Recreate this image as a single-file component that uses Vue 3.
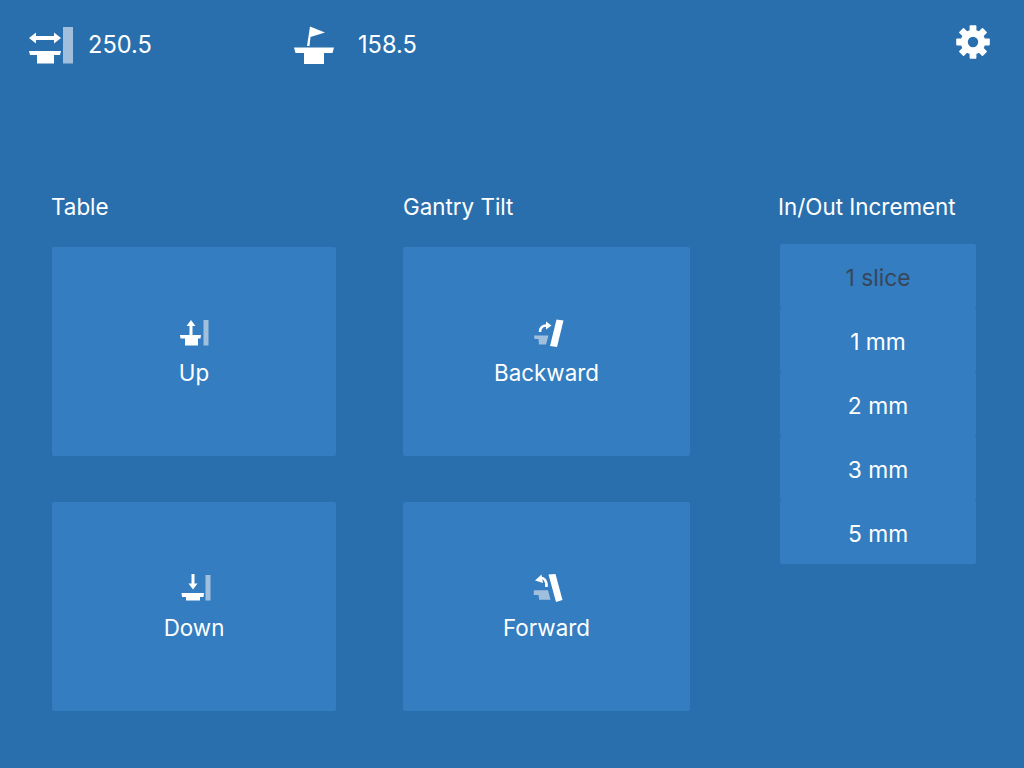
<script setup>
const incrementos = ['1 slice', '1 mm', '2 mm', '3 mm', '5 mm']
const seleccionado = '1 slice'

// gear teeth, 8 around the centre
const dientes = [0, 45, 90, 135, 180, 225, 270, 315]
</script>

<template>
  <div class="page">
    <header class="top">
      <div class="readout first">
        <svg class="top-icon" width="44" height="37" viewBox="29 28 44 37">
          <rect x="63" y="28" width="10" height="36.5" fill="#a0bfdc" />
          <path d="M29 39 L36 33.5 V37 H54 V33.5 L61 39 L54 44.5 V41 H36 V44.5 Z" fill="#fff" />
          <path d="M29 52 H61 L60 56 H54 V64.5 H37 V56 H30 Z" fill="#fff" />
        </svg>
        <span class="value">250.5</span>
      </div>
      <div class="readout second">
        <svg class="top-icon" width="40" height="38" viewBox="294 26 40 38">
          <path d="M307 46 L310 26.5 L325 32.5 L310.5 37 L309.5 46 Z" fill="#fff" />
          <path d="M294 47.5 H334 L332.5 53 H324 V64 H304 V53 H295.5 Z" fill="#fff" />
        </svg>
        <span class="value">158.5</span>
      </div>
      <svg class="gear" width="36" height="36" viewBox="-18 -18 36 36">
        <rect v-for="d in dientes" :key="d" x="-3.4" y="-16.8" width="6.8" height="8" rx="0.8" fill="#fff" :transform="`rotate(${d})`" />
        <circle r="8.7" fill="none" stroke="#fff" stroke-width="7" />
      </svg>
    </header>

    <main class="content">
      <section class="col col-table">
        <h2>Table</h2>
        <div class="stack">
          <button class="big">
            <svg width="34" height="28" viewBox="177 319 34 28">
              <rect x="203.5" y="320" width="5" height="25.5" fill="#a0bfdc" />
              <path d="M191 320 L195.5 326 H192.5 V335 H189.5 V326 H186.5 Z" fill="#fff" />
              <path d="M180 335 H201 L200.5 338.5 H198 V345.5 H185 V338.5 H180.5 Z" fill="#fff" />
            </svg>
            <span>Up</span>
          </button>
          <button class="big">
            <svg width="34" height="28" viewBox="177 574 34 28">
              <rect x="205.5" y="575" width="5" height="25.5" fill="#a0bfdc" />
              <path d="M193 589.5 L188.5 583.5 H191.5 V574 H194.5 V583.5 H197.5 Z" fill="#fff" />
              <path d="M181.5 593 H204 L203.5 597 H200 V600.5 H186 V597 H182 Z" fill="#fff" />
            </svg>
            <span>Down</span>
          </button>
        </div>
      </section>

      <section class="col col-gantry">
        <h2>Gantry Tilt</h2>
        <div class="stack">
          <button class="big">
            <svg width="34" height="28" viewBox="529.5 319 34 28">
              <path d="M556 319.5 L563 320.5 L556.5 347 L549.5 346 Z" fill="#fff" />
              <path d="M533.5 335.5 H548 L545.5 344.5 H538.5 L538 339 H534 Z" fill="#a0bfdc" />
              <path d="M539.5 332 C539.5 328 542 325.5 546 325.5" fill="none" stroke="#fff" stroke-width="2.6" />
              <path d="M545.5 321.5 L551 325.5 L545.5 329.5 Z" fill="#fff" />
            </svg>
            <span>Backward</span>
          </button>
          <button class="big">
            <svg width="34" height="28" viewBox="529.5 574 34 28">
              <path d="M548 574.5 L555 574 L562 600 L555.5 602 Z" fill="#fff" />
              <path d="M533.3 590.3 H547.5 L550 599.7 H538.7 L538 595 H533.3 Z" fill="#a0bfdc" />
              <path d="M546 587 C546.5 581 543.5 576.5 538.5 578.5" fill="none" stroke="#fff" stroke-width="2.6" />
              <path d="M541 574.5 L534.5 580.5 L542.5 583 Z" fill="#fff" />
            </svg>
            <span>Forward</span>
          </button>
        </div>
      </section>

      <section class="col col-inc">
        <h2>In/Out Increment</h2>
        <div class="inc-list">
          <button
            v-for="i in incrementos"
            :key="i"
            class="inc"
            :class="{ activo: i === seleccionado }"
          >{{ i }}</button>
        </div>
      </section>
    </main>
  </div>
</template>

<style>
html, body {
  margin: 0;
  background: #2a6fad;
}
</style>

<style scoped>
.page {
  width: 1024px;
  height: 768px;
  overflow: hidden;
  background: #2a6fad;
  color: #fff;
  font-family: Inter, "Liberation Sans", sans-serif;
}

.top {
  display: flex;
  align-items: center;
  height: 46px;
  padding: 22px 33px 0 29px;
}

.readout {
  display: flex;
  align-items: center;
  font-size: 23.6px;
}
.value {
  margin-bottom: 2px;
}
.first {
  width: 265px;
}
.first .top-icon {
  margin-right: 15px;
}
.second .top-icon {
  margin-right: 24px;
}
.gear {
  margin-left: auto;
  margin-top: -6px;
}

.content {
  display: flex;
  padding: 124px 0 0 52px;
}

.col h2 {
  margin: 0;
  height: 30px;
  line-height: 30px;
  font-size: 22.4px;
  font-weight: 400;
}
.col-table h2 {
  margin-left: -1px;
}

.col-table {
  width: 284px;
  margin-right: 67px;
}
.col-gantry {
  width: 287px;
  margin-right: 88px;
}
.col-inc {
  width: 198px;
}

.stack {
  display: flex;
  flex-direction: column;
  gap: 46px;
  margin-top: 25px;
}

button {
  border: 0;
  padding: 0;
  color: inherit;
  font: inherit;
  background: #337dc0;
  border-radius: 2px;
}

.big {
  height: 209px;
  display: flex;
  flex-direction: column;
  align-items: center;
  justify-content: center;
  gap: 12px;
  padding-top: 2px;
  font-size: 22.4px;
  line-height: 27px;
}
.big svg {
  display: block;
}

.inc-list {
  display: flex;
  flex-direction: column;
  margin: 22px 0 0 2px;
}
.inc {
  height: 64px;
  width: 196px;
  padding-top: 2px;
  font-size: 22.8px;
}
.inc.activo {
  color: #37475a;
}
</style>
